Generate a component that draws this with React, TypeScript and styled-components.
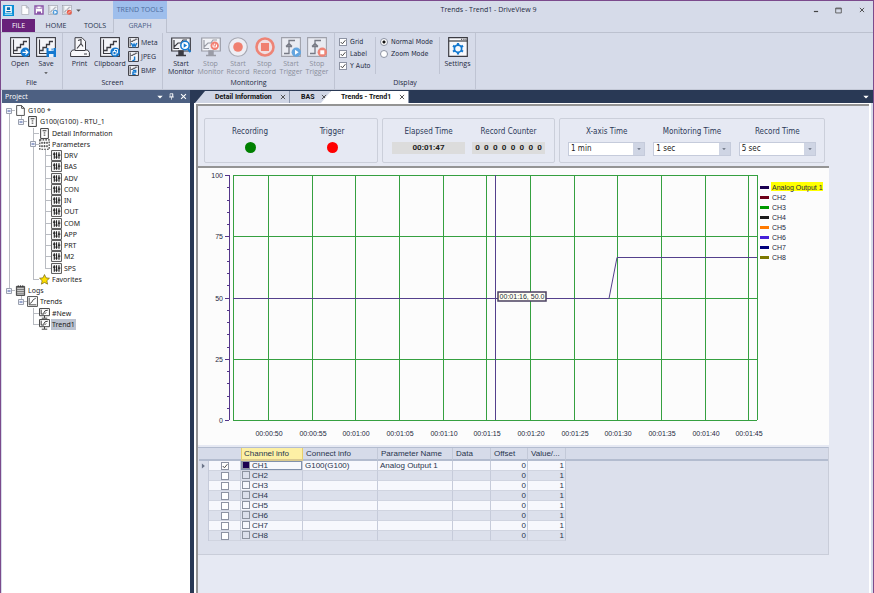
import React from 'react';
import styled, { createGlobalStyle, css } from 'styled-components';

const ui = '"Open Sans", "Noto Sans", sans-serif';
const noto = '"Noto Sans", "Open Sans", sans-serif';
const tahoma = '"DejaVu Sans Condensed", "DejaVu Sans", "Noto Sans", sans-serif';
const arial = '"Liberation Sans", Arial, sans-serif';

const Global = createGlobalStyle`
  * { box-sizing: border-box; }
  body { margin: 0; background: #d6dbe9; color: #1e2a42; font: 8px/10px ${ui}; }
  button, input, select { font: inherit; color: inherit; margin: 0; padding: 0; }
  button { border: 0; background: none; }
  svg { display: block; flex: none; }
`;

const Window = styled.div`
  display: flex; flex-direction: column; min-height: 100vh;
  border: 1px solid #7b4a8c; border-bottom: 0; background: #d6dbe9;
`;

/* ---------- title bar and ribbon ---------- */
const TitleBar = styled.header`display: flex; height: 18px; align-items: stretch;`;
const QuickBar = styled.div`
  display: flex; align-items: center; gap: 4px; width: 112px; padding-left: 2px;
  button { display: flex; }
  > svg { margin-right: 2px; }
`;
const ContextTitle = styled.div`
  width: 54px; background: #9ebeec; color: #4c6b9c; text-align: center; line-height: 18px; font-size: 7px; white-space: nowrap;
`;
const Title = styled.h1`
  flex: 1; margin: 0; padding-left: 6px; font-size: 7px; line-height: 18px; font-weight: 400; text-align: center;
`;
const WinButton = styled.button`width: 23px; display: grid; place-items: center;`;

const RibbonTabs = styled.nav`
  display: flex; height: 14px; padding-left: 1px; border-bottom: 1px solid #bcc1cf;
`;
const RibbonTab = styled.button<{ $w: number; $kind?: 'file' | 'active' }>`
  width: ${p => p.$w}px; height: 13px; line-height: 13px; font-size: 7px; color: #24304a;
  ${p => p.$kind === 'file' && css`background: #68217a; color: #fff;`}
  ${p => p.$kind === 'active' && css`
    height: 14px; background: #d6dbe9; color: #4c5f88; border: 1px solid #bcc1cf; border-bottom: 0; border-top: 0; line-height: 12px;
  `}
`;

const Ribbon = styled.div`display: flex; height: 57px; border-bottom: 1px solid #c3c8d6;`;
const Group = styled.section<{ $w: number }>`
  width: ${p => p.$w}px; display: flex; flex-direction: column; justify-content: space-between;
  border-right: 1px solid #bfc4d3; padding: 4px 0 2px;
`;
const GroupBody = styled.div<{ $pad?: number }>`display: flex; height: 40px; padding-left: ${p => p.$pad ?? 4}px;`;
const GroupName = styled.h2`margin: 0; font-size: 7px; line-height: 9px; font-weight: 400; text-align: center;`;
const BigButton = styled.button<{ $w: number }>`
  width: ${p => p.$w}px; display: flex; flex-direction: column; align-items: center; gap: 3px;
  font-size: 7px; line-height: 8px; white-space: pre; text-align: center;
  &:disabled { color: #8b8f9c; }
`;
const SmallStack = styled.div`display: flex; flex-direction: column; gap: 3px; padding-left: 1px;`;
const SmallButton = styled.button`display: flex; align-items: center; gap: 2px; height: 11px; font-size: 7px;`;
const OptionStack = styled.div<{ $w: number; $line?: boolean }>`
  width: ${p => p.$w}px; height: 37px; display: flex; flex-direction: column; gap: 2px; padding-left: 4px;
  border-right: ${p => (p.$line ? '1px solid #bfc4d3' : '0')};
`;
const Option = styled.label`
  display: flex; align-items: center; gap: 3px; height: 10px; font: 7px/10px ${tahoma}; white-space: nowrap;
`;
const Tick = styled.input`
  appearance: none; width: 8px; height: 8px; border: 1px solid #8d93a3; background: #fff; flex: none;
  &[type='radio'] { border-radius: 50%; }
  &[type='radio']:checked { background: radial-gradient(circle, #111 0 1px, #fff 2px); }
  &[type='checkbox']:checked {
    background: #fff url("data:image/svg+xml,%3Csvg xmlns='http://www.w3.org/2000/svg' viewBox='0 0 5 5'%3E%3Cpath d='M.6 2.5 2 4 4.500 1' fill='none' stroke='%23444' stroke-width='.8'/%3E%3C/svg%3E");
  }
`;

/* ---------- project tree ---------- */
const Body = styled.div`display: flex; flex: 1;`;
const Side = styled.aside`width: 189px; flex: none; background: #fff; border-left: 1px solid #d6dbe9;`;
const SideHead = styled.div`
  height: 13px; display: flex; align-items: center; gap: 5px; padding: 0 3px; background: #4d6082; color: #fff;
  h2 { flex: 1; margin: 0; font-size: 7px; font-weight: 400; }
  button { display: flex; }
`;
const Tree = styled.ul`
  list-style: none; margin: 0; padding: 2px 0 0 1px; height: 227px;
  display: grid; grid-template-rows: repeat(20, 1fr);
`;
const TreeRow = styled.li`display: flex; align-items: center; min-height: 0;`;
const Guide = styled.span<{ $kind: string }>`
  width: 12px; align-self: stretch; display: grid; place-items: center;
  ${p => {
    const g = 'linear-gradient(#b9bcc2,#b9bcc2)';
    const h = `${g} 6px 50% / 6px 1px no-repeat`;
    const v = `${g} 6px 0 / 1px 100% no-repeat`;
    const top = `${g} 6px 0 / 1px 50% no-repeat`;
    const low = `${g} 6px 100% / 1px 50% no-repeat`;
    const map: Record<string, string> = { l: v, t: `${v}, ${h}`, e: `${top}, ${h}`, s: `${low}, ${h}`, n: 'none' };
    return `background: ${map[p.$kind]};`;
  }}
`;
const TreeText = styled.span<{ $on?: boolean }>`
  margin-left: 1px; padding: 0 1px; font: 7px/11px ${noto}; white-space: nowrap; color: #1c1c1c;
  background: ${p => (p.$on ? '#bcc3d1' : 'none')};
`;

/* ---------- documents ---------- */
const Main = styled.main`flex: 1; min-width: 0; display: flex; flex-direction: column; border-left: 4px solid #293955;`;
const DocTabs = styled.div`display: flex; height: 13px; background: #293955; padding: 1px 4px 0 1px; align-items: stretch;`;
const DocTab = styled.div<{ $w: number; $on?: boolean; $slant?: boolean }>`
  width: ${p => p.$w}px; display: flex; align-items: center; justify-content: space-between;
  padding: 0 3px 0 ${p => (p.$slant ? 20 : 11)}px; margin-left: ${p => (p.$on ? -10 : 0)}px;
  background: ${p => (p.$on ? '#fff' : '#d0d6e5')}; color: #111;
  clip-path: ${p => (p.$slant ? 'polygon(10px 0, 100% 0, 100% 100%, 0 100%)' : 'none')};
  border-right: 1px solid #8e99ae;
  font: bold 7px/12px Roboto, sans-serif;
  button { display: flex; }
  > button:first-child { white-space: nowrap; }
`;
const TabFill = styled.div`flex: 1;`;
const Doc = styled.div`
  flex: 1; margin-right: 2px; border: solid #fff; border-width: 1px 2px 0 2px; background: #e6e9f3; display: flex;
`;
const DocInner = styled.div`flex: 1; min-width: 0; border: 2px solid #949494; border-width: 2px 0 0 2px; padding-right: 40px;`;

const Controls = styled.div`display: flex; gap: 4px; padding: 12px 4px 3px 6px; border-bottom: 2px solid #949494;`;
const Card = styled.fieldset<{ $cols: string; $grow?: boolean; $pad: number; $gap?: number }>`
  margin: 0; min-width: 0; height: 45px; border: 1px solid #cbcfda; border-radius: 2px; padding: 8px ${p => p.$pad}px 0;
  display: grid; grid-template-columns: ${p => p.$cols}; gap: 0 ${p => p.$gap ?? 0}px;
  flex: ${p => (p.$grow ? '1' : 'none')};
`;
const Field = styled.div`
  display: flex; flex-direction: column; align-items: stretch; gap: 5px; text-align: center;
  font: 8px/10px ${tahoma}; color: #2c3a58;
`;
const Lamp = styled.span<{ $c: string }>`width: 11px; height: 11px; border-radius: 50%; align-self: center; background: ${p => p.$c};`;
const Readout = styled.output`
  height: 12px; background: #dcdcdc; display: flex; justify-content: space-around; padding: 0 1px; color: #222; font: bold 8px/12px Roboto, sans-serif;
`;
const Combo = styled.span`
  display: grid; height: 14px; background: #fff; border: 1px solid #c5cbdb;
  select { grid-area: 1 / 1; appearance: none; border: 0; background: none; padding: 0 12px 0 2px; font: 8px/12px ${tahoma}; color: #222; min-width: 0; }
  span { grid-area: 1 / 1; justify-self: end; width: 11px; background: #cfd5e4; display: grid; place-items: center; pointer-events: none; }
`;

const ChartPanel = styled.figure`
  margin: 0; background: #fcfcfc;
  svg { width: 100%; height: auto; font: 7px ${arial}; fill: #1c2840; }
`;

const TablePanel = styled.div`
  margin-top: 2px; height: 108px; padding-left: 1px; background: #dce0ec; border: 1px solid #c9cdd9; border-left: 0;
  border-top: 1px solid #b3bccf;
`;
const Grid = styled.table`
  width: 100%; table-layout: fixed; border-collapse: separate; border-spacing: 0; font: 8px/9px ${arial}; color: #28344d;
  th { height: 13px; font-weight: 400; text-align: left; padding: 0 3px; background: #d6dbe9; border-bottom: 2px solid #b3bccf; border-right: 1px solid #c3c9d8; white-space: nowrap; overflow: hidden; }
  th:first-child, th:nth-child(2) { border-right: 0; }
  th:last-child { border-right: 0; }
  td { height: 10px; padding: 0 2px; border-right: 1px solid #c6cbda; border-bottom: 1px solid #d0d4e0; white-space: nowrap; }
  tr:nth-child(odd) td { background: #f7f8fd; }
  && tbody tr td:first-child, && tbody tr td:last-child { background: none; border-bottom: 0; }
  tbody td:last-child { border-right: 0; }
  th, td { line-height: 9px; }
`;
const ChannelHead = styled.th`&&& { background: #fdf0a5; border: 1px solid #e8cf6c; border-top: 0; border-bottom: 2px solid #d9c98f; padding: 0 2px; }`;
const NumCell = styled.td`&& { text-align: right; padding-right: 1px; }`;
const TickCell = styled.td`input { display: block; margin: 0 auto; }`;
const ChannelCell = styled.td<{ $on: boolean }>`
  && { padding-left: 1px; }
  ${p => p.$on && css`box-shadow: inset 0 0 0 1px #8291ac;`}
`;
const Chip = styled.span<{ $c: string }>`
  display: inline-block; vertical-align: top; width: 8px; height: 8px; margin-right: 2px; border: 1px solid #8d93a0; background: ${p => p.$c};
`;

/* ---------- drawings ---------- */
const INK = '#3b3b42';
const BLUE = '#1479d0';

const Plot = ({ c = INK }: { c?: string }) => (
  <g fill="none" stroke={c}>
    <rect x=".6" y=".6" width="18.8" height="18.8" fill="#f4f5f9" strokeWidth="1.1" />
    <path d="M3.500 2.500v14h13" strokeWidth="1.1" />
    <path d="M4 13.500h3v-3h3.500v-3h3v-3h3.500" strokeWidth="1.3" />
  </g>
);
const Svg = ({ s = 20, children }: { s?: number; children: React.ReactNode }) => (
  <svg width={s} height={s} viewBox="0 0 20 20" aria-hidden="true">{children}</svg>
);
const OpenIcon = () => (
  <Svg><Plot /><circle cx="15.300" cy="15.300" r="4.700" fill={BLUE} /><path d="M12.500 15.300h5M15.500 13l2.300 2.300-2.300 2.300" stroke="#fff" fill="none" strokeWidth="1.2" /></Svg>
);
const SaveIcon = () => (
  <Svg><Plot /><path d="M10.500 11h9.500v9h-9.500z" fill={BLUE} /><path d="M12.500 11h5v3h-5zM13 17h4.500v3H13z" fill="#e9f1fa" /><path d="M15.600 11.500h1v2h-1z" fill={BLUE} /></Svg>
);
const PrintIcon = () => (
  <Svg>
    <path d="M5 14V.7h7l3.500 3.600V14" fill="#f8f8fb" stroke={INK} />
    <path d="M8 3.500l3-1v4l-4 5M11 6.500l2 3" fill="none" stroke={INK} strokeWidth="1.1" />
    <path d="M5 13H2.500L.6 15.500v4h18.800v-4L17.500 13h-2" fill="#f8f8fb" stroke={INK} /><path d="M5 13.500h10.500" stroke={INK} /><path d="M14 16.500h3v1h-3z" fill={INK} />
  </Svg>
);
const ClipIcon = () => (
  <Svg><Plot /><circle cx="15.200" cy="15.200" r="4.800" fill={BLUE} /><path d="M13 14.500h3v3.200h-3zM14.500 14v-1.500h3V16H16.500" fill="none" stroke="#fff" strokeWidth=".9" /></Svg>
);
const FormatIcon = ({ d }: { d: string }) => (
  <Svg s={11}><path d="M1 1h18v18H1z" fill="#f4f5f9" stroke={INK} strokeWidth="1.800" /><path d="M4 3v14M5 8h4V6h4V4h4" fill="none" stroke={INK} strokeWidth="1.600" /><path d={d} fill="none" stroke={BLUE} strokeWidth="2.600" /></Svg>
);
const MonitorIcon = ({ off }: { off?: boolean }) => {
  const c = off ? '#9a9ca6' : INK;
  return (
    <Svg>
      <path d="M.7 1h18.600v13H.7z" fill="#f1f2f7" stroke={c} strokeWidth="1.200" />
      <path d="M3 3v8.500h5M3 10l4-4h3l2-3h4" fill="none" stroke={c} strokeWidth="1.200" />
      <path d="M8 14h4v3.500H8zM5 18.500h10" fill={c} stroke={c} strokeWidth="1.500" />
      {off ? (
        <><circle cx="13.700" cy="8.700" r="4.200" fill="#f27f72" /><path d="M12 7.500v2.500h3.500V7.500M13.700 6.500v2" fill="none" stroke="#fff" strokeWidth="1" /></>
      ) : (
        <><circle cx="14" cy="8.500" r="4.200" fill="#fff" stroke={BLUE} strokeWidth="1.500" /><path d="M12.700 6.200v4.600l3.400-2.300z" fill={BLUE} /><path d="M17 12l2.500 3" stroke={BLUE} strokeWidth="2" /></>
      )}
    </Svg>
  );
};
const RecordIcon = () => (
  <Svg><circle cx="10" cy="10" r="9.300" fill="#eeeef4" stroke="#a6a8b2" strokeWidth="1.100" /><circle cx="10" cy="10" r="4.800" fill="#f08070" /></Svg>
);
const StopRecordIcon = () => (
  <Svg><circle cx="10" cy="10" r="8.500" fill="#f1dfe2" stroke="#ee8476" strokeWidth="2.600" /><path d="M6 6h8v8H6z" fill="#f08070" /></Svg>
);
const TriggerIcon = ({ stop }: { stop?: boolean }) => (
  <Svg>
    <path d="M.6.600h18.800v18.800H.6z" fill="#e9ebf2" stroke="#9fa1ab" strokeWidth="1.100" />
    <path d="M3 16.500h5V3.500h6M5 9.500l3-3 3 3M5 9.500h6" fill="none" stroke="#777a85" strokeWidth="1.300" />
    <circle cx="15.300" cy="15.300" r="4.700" fill={stop ? '#ee8476' : '#64a5df'} />
    {stop ? <path d="M13.300 13.300h4v4h-4z" fill="#fff" /> : <path d="M14 12.800v5l3.600-2.500z" fill="#fff" />}
  </Svg>
);
const SettingsIcon = () => (
  <Svg>
    <path d="M.7.700h18.600v18.600H.7z" fill="#f8f9fc" stroke={INK} strokeWidth="1.200" />
    <path d="M.7 4h18.600" stroke={INK} strokeWidth="1.200" /><path d="M13 2.300h1.200M15.300 2.300h1.200M17.400 2.300h1" stroke={INK} />
    <g stroke={BLUE} fill="none"><circle cx="10" cy="11.700" r="3.600" strokeWidth="1.700" /><path d="M10 6v2.200M10 15.200v2.200M5 8.800l2 1.200M13 13.400l2 1.200M15 8.800l-2 1.200M7 13.400l-2 1.200" strokeWidth="2.200" /></g>
  </Svg>
);
const LogoIcon = () => (
  <Svg s={11}><path d="M0 0h20v20H0z" fill="#0b8fd6" /><path d="M4 2h12v13H4z" fill="#fff" /><path d="M7 4h6v5H7zM6 11h8v2H6z" fill="#0b6fb0" /><path d="M3 16h14v2H3z" fill="#9be0f6" /></Svg>
);
const NewIcon = () => (
  <Svg s={10}><path d="M3.500 1h9l5 5v13h-14zM12.500 1v5h5" fill="#fdfdfe" stroke="#a3a5ae" strokeWidth="1.300" /></Svg>
);
const DiskIcon = () => (
  <Svg s={10}><path d="M2 2h16v16H2z" fill="#fff" stroke="#8a55a8" strokeWidth="3" /><path d="M5 2h10v6H5zM6 13h8v5H6z" fill="#8a55a8" /><path d="M6.500 3h7v4h-7z" fill="#fff" /></Svg>
);
const QuickIcon = ({ stop }: { stop?: boolean }) => (
  <Svg s={10}><Plot c="#8e919c" /><circle cx="14.500" cy="14.500" r="5" fill={stop ? '#e8604f' : '#4e9bdc'} /><path d={stop ? 'M12 17l5-5' : 'M13.300 12v5l3.700-2.500z'} stroke="#fff" strokeWidth="1.300" fill="#fff" /></Svg>
);
const Cross = ({ c = '#444', s = 6 }: { c?: string; s?: number }) => (
  <Svg s={s}><path d="M3 3l14 14M17 3L3 17" stroke={c} strokeWidth="3" /></Svg>
);
const Down = ({ c = '#fff', s = 6 }: { c?: string; s?: number }) => (
  <Svg s={s}><path d="M1 6h18l-9 9z" fill={c} /></Svg>
);
const Pin = () => <Svg s={7}><path d="M6 2h8v9H6zM3 11.500h14M10 12v7M12.500 2v9" stroke="#fff" strokeWidth="2" fill="none" /></Svg>;
const Toggle = () => (
  <svg width="6" height="6" viewBox="0 0 6 6" aria-hidden="true"><path d="M.5.500h5v5h-5z" fill="#f3f5fb" stroke="#9aa0ae" /><path d="M1.500 3h3" stroke="#3b55a0" /></svg>
);

const treeIcons: Record<string, React.ReactNode> = {
  file: <path d="M3 1h9l5 5v13H3zM12 1v5h5" fill="#fff" stroke="#333" strokeWidth="1.500" />,
  device: <><path d="M3 1h14v18H3z" fill="#fff" stroke="#333" strokeWidth="1.700" /><path d="M6.500 5h7M8.500 9h3M8.500 13h3" stroke="#333" strokeWidth="1.800" /></>,
  params: <><path d="M1.500 1.500h17v17h-17z" fill="#fff" stroke="#333" strokeWidth="2" strokeDasharray="3 2" /><path d="M3.500 7h4M8 7h4M12.500 7h4M3.500 13h4M8 13h4M12.500 13h4M5.500 5v4M10 5v4M14.500 5v4M5.500 11v4M10 11v4M14.500 11v4" stroke="#333" strokeWidth="1.300" /></>,
  group: <><path d="M1 1h18v18H1z" fill="#fff" stroke="#555" strokeWidth="1.800" /><path d="M6 4v12M10 4v12M14.500 4v12M3.500 7.500H8M8 13h4M12.500 9.500H17" stroke="#222" strokeWidth="2.200" /></>,
  star: <path d="M10 1l2.700 6 6.300.700-4.700 4.400 1.300 6.400L10 15.300 4.400 18.500l1.300-6.400L1 7.700 7.300 7z" fill="#ffe000" stroke="#6a5a10" strokeWidth="1.200" />,
  logs: <><path d="M2.500 2.500h15v16.500h-15z" fill="#777" stroke="#333" strokeWidth="1.500" /><path d="M4 6.500h12M4 10h12M4 13.500h12M4 16.700h12" stroke="#eee" strokeWidth="1.300" /><path d="M6 .5v3M10 .5v3M14 .5v3" stroke="#333" strokeWidth="1.500" /></>,
  trends: <><path d="M1 1h18v18H1z" fill="#fff" stroke="#555" strokeWidth="1.800" /><path d="M4 3v13h13M5 14l4-3 2-4 5-3" fill="none" stroke="#333" strokeWidth="1.500" /></>,
  trend: <><path d="M1 1h18v13H1z" fill="#fff" stroke="#444" strokeWidth="1.800" /><path d="M4 3v8h5M8 10l3-5 5-1M13 8l-3 3M10 14v4M5 18.500h10" fill="none" stroke="#333" strokeWidth="1.700" /></>,
};

const tree: [string, string, string, boolean?, boolean?][] = [
  ['s', 'file', 'G100 *', true],
  ['le', 'device', 'G100(G100) - RTU_1', true],
  ['lnt', 'device', 'Detail Information'],
  ['lnt', 'params', 'Parameters', true],
  ...['DRV', 'BAS', 'ADV', 'CON', 'IN', 'OUT', 'COM', 'APP', 'PRT', 'M2'].map(
    n => ['lnlt', 'group', n] as [string, string, string]),
  ['lnle', 'group', 'SPS'],
  ['lne', 'star', 'Favorites'],
  ['e', 'logs', 'Logs', true],
  ['ne', 'trends', 'Trends', true],
  ['nnt', 'trend', '#New'],
  ['nne', 'trend', 'Trend1', false, true],
];

/* ---------- trend chart ---------- */
const LEFT = 35, RIGHT = 559, TOP = 7, BOTTOM = 252;
const START = 46, END = 106;
const px = (t: number) => Math.round(LEFT + ((t - START) * (RIGHT - LEFT)) / (END - START));
const py = (v: number) => Math.round(BOTTOM - (v * (BOTTOM - TOP)) / 100);
const clock = (t: number) => `00:${String(Math.floor(t / 60)).padStart(2, '0')}:${String(t % 60).padStart(2, '0')}`;
const times = Array.from({ length: 12 }, (_, i) => 50 + i * 5);
const series: [string, string][] = [
  ['Analog Output 1', '#1a0050'], ['CH2', '#6e0018'], ['CH3', '#009a00'], ['CH4', '#1c1c1c'],
  ['CH5', '#ff7a00'], ['CH6', '#4420d8'], ['CH7', '#00007c'], ['CH8', '#7c7800'],
];

const TrendChart = () => (
  <ChartPanel>
    <svg viewBox="0 0 631 277" role="img" aria-label="Trend1">
      <g stroke="#35a040" strokeWidth="1" shapeRendering="crispEdges">
        {[0, 25, 50, 75, 100].map(v => <path key={v} d={`M${LEFT} ${py(v)}.5H${RIGHT}`} />)}
        {[START, ...times, END].map(t => <path key={t} d={`M${px(t)}.5 ${TOP}V${BOTTOM}`} />)}
      </g>
      <g stroke="#54368a" shapeRendering="crispEdges">
        <path d={`M31.500 ${TOP}V${BOTTOM}`} />
        {Array.from({ length: 21 }, (_, i) => <path key={i} d={`M${i % 5 ? 29 : 27} ${py(i * 5)}.5H31`} />)}
      </g>
      {[0, 25, 50, 75, 100].map(v => <text key={v} x="25" y={py(v) + 3} textAnchor="end">{v}</text>)}
      {times.map(t => <text key={t} x={px(t) + 1} y="268" textAnchor="middle">{clock(t)}</text>)}
      <g fill="none" stroke="#54408c">
        <path d={`M${LEFT} ${py(50)}.5H${px(89)}M${px(90)} ${py(66.6)}.5H${RIGHT}M${px(76)}.5 ${TOP}V${BOTTOM}`} shapeRendering="crispEdges" />
        <path d={`M${px(89)} ${py(50)}.5L${px(90)} ${py(66.6)}.5`} />
      </g>
      <rect x="300" y="124" width="48" height="9" fill="#fffff0" stroke="#4a4060" strokeWidth="1.500" />
      <text x="324" y="131" textAnchor="middle">00:01:16, 50.0</text>
      <rect x="573" y="14" width="52" height="9" fill="#ffff00" />
      {series.map(([n, c], i) => (
        <g key={n}>
          <rect x="562" y={18 + i * 10} width="9" height="3" fill={c} />
          <text x="574" y={22 + i * 10}>{n}</text>
        </g>
      ))}
    </svg>
  </ChartPanel>
);

const Picker = ({ label, value, options }: { label: string; value: string; options: string[] }) => (
  <Field as="label">
    {label}
    <Combo>
      <select defaultValue={value}>{options.map(o => <option key={o}>{o}</option>)}</select>
      <span><Down c="#5c6475" s={4} /></span>
    </Combo>
  </Field>
);

const ChannelTable = () => (
  <TablePanel>
    <Grid>
      <colgroup>
        {[10, 32, 62, 75, 75, 38, 37, 38].map((w, i) => <col key={i} width={w} />)}
        <col />
      </colgroup>
      <thead>
        <tr>
          <th /><th /><ChannelHead>Channel info</ChannelHead><th>Connect info</th><th>Parameter Name</th>
          <th>Data</th><th>Offset</th><th>Value/...</th><th />
        </tr>
      </thead>
      <tbody>
        {series.map((_, i) => (
          <tr key={i}>
            <td>{i === 0 && <Svg s={6}><path d="M3 2l10 8-10 8z" fill="#6b7488" /></Svg>}</td>
            <TickCell><Tick type="checkbox" defaultChecked={i === 0} aria-label={`Show CH${i + 1}`} /></TickCell>
            <ChannelCell $on={i === 0}><Chip $c={i === 0 ? '#1a0050' : 'transparent'} />{`CH${i + 1}`}</ChannelCell>
            <td>{i === 0 && 'G100(G100)'}</td>
            <td>{i === 0 && 'Analog Output 1'}</td>
            <td />
            <NumCell>0</NumCell>
            <NumCell>1</NumCell>
            <td />
          </tr>
        ))}
      </tbody>
    </Grid>
  </TablePanel>
);

export default function App() {
  return (
    <>
      <Global />
      <Window>
        <TitleBar>
          <QuickBar>
            <LogoIcon />
            <button aria-label="New"><NewIcon /></button>
            <button aria-label="Save"><DiskIcon /></button>
            <button aria-label="Start"><QuickIcon /></button>
            <button aria-label="Stop"><QuickIcon stop /></button>
            <button aria-label="Customize"><Down c="#555" s={5} /></button>
          </QuickBar>
          <ContextTitle>TREND TOOLS</ContextTitle>
          <Title>Trends - Trend1 - DriveView 9</Title>
          <WinButton aria-label="Minimize"><Svg s={6}><path d="M3 15h14" stroke="#444" strokeWidth="4" /></Svg></WinButton>
          <WinButton aria-label="Maximize"><Svg s={7}><path d="M2 3h16v14H2zM2 5h16" fill="none" stroke="#555" strokeWidth="2.500" /></Svg></WinButton>
          <WinButton aria-label="Close"><Cross /></WinButton>
        </TitleBar>
        <RibbonTabs>
          <RibbonTab $w={33} $kind="file">FILE</RibbonTab>
          <RibbonTab $w={42}>HOME</RibbonTab>
          <RibbonTab $w={36}>TOOLS</RibbonTab>
          <RibbonTab $w={54} $kind="active">GRAPH</RibbonTab>
        </RibbonTabs>
        <Ribbon>
          <Group $w={62}>
            <GroupBody $pad={6}>
              <BigButton $w={26}><OpenIcon />Open</BigButton>
              <BigButton $w={26}><SaveIcon />Save<Down c="#444" s={4} /></BigButton>
            </GroupBody>
            <GroupName>File</GroupName>
          </Group>
          <Group $w={100}>
            <GroupBody $pad={3}>
              <BigButton $w={27}><PrintIcon />Print</BigButton>
              <BigButton $w={34}><ClipIcon />Clipboard</BigButton>
              <SmallStack>
                <SmallButton><FormatIcon d="M6 11l3 6 2-4 2 4 3-6" />Meta</SmallButton>
                <SmallButton><FormatIcon d="M12 10v6l-4 2" />JPEG</SmallButton>
                <SmallButton><FormatIcon d="M9 10h5v3H9v4h5" />BMP</SmallButton>
              </SmallStack>
            </GroupBody>
            <GroupName>Screen</GroupName>
          </Group>
          <Group $w={172}>
            <GroupBody $pad={3}>
              <BigButton $w={30}><MonitorIcon />{'Start\nMonitor'}</BigButton>
              <BigButton $w={29} disabled><MonitorIcon off />{'Stop\nMonitor'}</BigButton>
              <BigButton $w={26} disabled><RecordIcon />{'Start\nRecord'}</BigButton>
              <BigButton $w={27} disabled><StopRecordIcon />{'Stop\nRecord'}</BigButton>
              <BigButton $w={26} disabled><TriggerIcon />{'Start\nTrigger'}</BigButton>
              <BigButton $w={26} disabled><TriggerIcon stop />{'Stop\nTrigger'}</BigButton>
            </GroupBody>
            <GroupName>Monitoring</GroupName>
          </Group>
          <Group $w={141}>
            <GroupBody $pad={0}>
              <OptionStack $w={41} $line>
                {['Grid', 'Label', 'Y Auto'].map(n => <Option key={n}><Tick type="checkbox" defaultChecked />{n}</Option>)}
              </OptionStack>
              <OptionStack $w={64} $line>
                <Option><Tick type="radio" name="mode" defaultChecked />Normal Mode</Option>
                <Option><Tick type="radio" name="mode" />Zoom Mode</Option>
              </OptionStack>
              <BigButton $w={35}><SettingsIcon />Settings</BigButton>
            </GroupBody>
            <GroupName>Display</GroupName>
          </Group>
        </Ribbon>
        <Body>
          <Side>
            <SideHead>
              <h2>Project</h2>
              <button aria-label="Menu"><Down /></button>
              <button aria-label="Pin"><Pin /></button>
              <button aria-label="Close panel"><Cross c="#fff" s={7} /></button>
            </SideHead>
            <Tree>
              {tree.map(([guides, icon, name, open, on]) => (
                <TreeRow key={name}>
                  {[...guides].map((g, i) => (
                    <Guide key={i} $kind={g}>{open && i === guides.length - 1 && <Toggle />}</Guide>
                  ))}
                  <Svg s={11}>{treeIcons[icon]}</Svg>
                  <TreeText $on={on}>{name}</TreeText>
                </TreeRow>
              ))}
            </Tree>
          </Side>
          <Main>
            <DocTabs>
              <DocTab $w={95} $slant><button>Detail Information</button><button aria-label="Close Detail Information"><Cross /></button></DocTab>
              <DocTab $w={41}><button>BAS</button><button aria-label="Close BAS"><Cross /></button></DocTab>
              <DocTab $w={88} $on $slant><button>Trends - Trend1</button><button aria-label="Close Trend1"><Cross /></button></DocTab>
              <TabFill />
              <button aria-label="Open documents"><Down /></button>
            </DocTabs>
            <Doc>
              <DocInner>
                <Controls>
                  <Card $cols="82px 82px" $pad={4}>
                    <Field>Recording<Lamp $c="#008000" /></Field>
                    <Field>Trigger<Lamp $c="#ff0000" /></Field>
                  </Card>
                  <Card $cols="73px 73px" $pad={9} $gap={7}>
                    <Field>Elapsed Time<Readout>00:01:47</Readout></Field>
                    <Field>Record Counter<Readout>{[...'00000000'].map((d, i) => <span key={i}>{d}</span>)}</Readout></Field>
                  </Card>
                  <Card $cols="1fr 1fr 1fr" $pad={8} $gap={8} $grow>
                    <Picker label="X-axis Time" value="1 min" options={['1 min', '5 min', '10 min']} />
                    <Picker label="Monitoring Time" value="1 sec" options={['1 sec', '5 sec', '10 sec']} />
                    <Picker label="Record Time" value="5 sec" options={['1 sec', '5 sec', '10 sec']} />
                  </Card>
                </Controls>
                <TrendChart />
                <ChannelTable />
              </DocInner>
            </Doc>
          </Main>
        </Body>
      </Window>
    </>
  );
}
